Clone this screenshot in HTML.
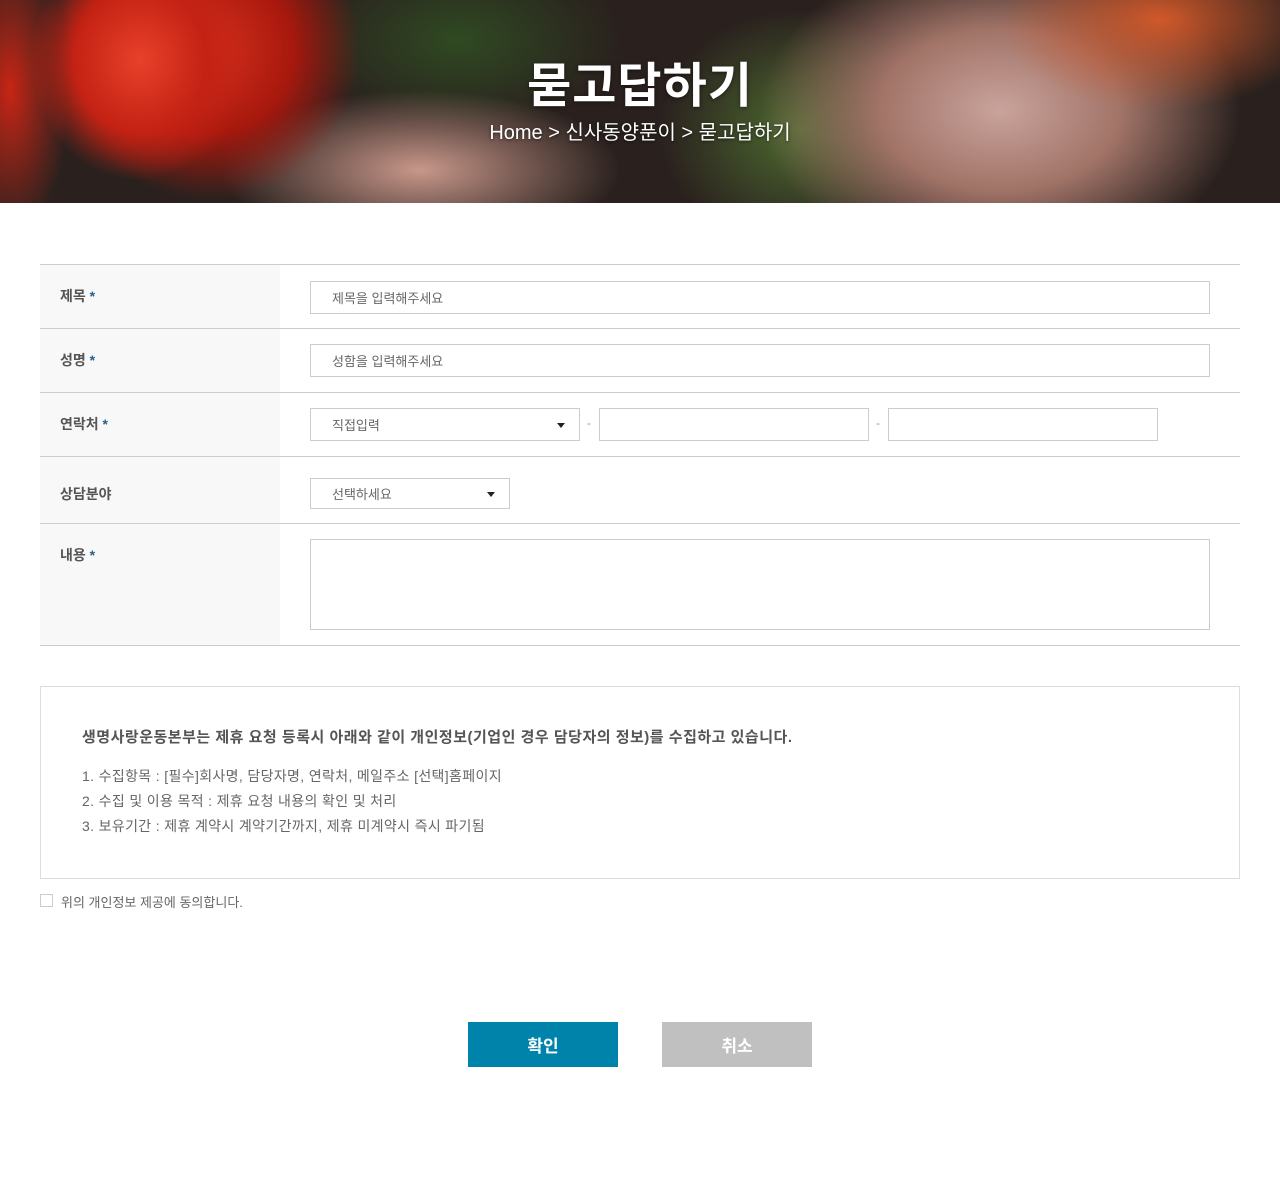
<!DOCTYPE html>
<html><head><meta charset="utf-8"><style>
*{margin:0;padding:0;box-sizing:border-box}
body{width:1280px;height:1201px;background:#fff;font-family:"Liberation Sans","Noto Sans CJK KR",sans-serif;position:relative;overflow:hidden;color:#555}
.hero{position:absolute;left:0;top:0;width:1280px;height:203px;overflow:hidden;
background:
radial-gradient(ellipse 110px 120px at 140px 60px,#e8412a 0%,#c42214 60%,rgba(120,10,5,0) 100%),
radial-gradient(ellipse 150px 150px at 210px 50px,#d3301c 0%,#a8180d 55%,rgba(80,10,5,0) 100%),
radial-gradient(ellipse 60px 150px at 10px 90px,#c72515 0%,rgba(120,15,8,0) 100%),
radial-gradient(ellipse 160px 90px at 1160px 20px,#d0582a 0%,rgba(150,50,20,0) 100%),
radial-gradient(ellipse 240px 160px at 1000px 110px,#c9a39c 0%,#a27468 50%,rgba(80,40,35,0) 100%),
radial-gradient(ellipse 200px 80px at 420px 170px,#c8978a 0%,rgba(100,60,50,0) 100%),
radial-gradient(ellipse 160px 90px at 460px 40px,#2f4a22 0%,rgba(30,40,20,0) 100%),
radial-gradient(ellipse 140px 120px at 800px 130px,#4d6b30 0%,rgba(40,60,25,0) 100%),
#2a211e}
.hero h1{position:absolute;left:0;width:1280px;top:58px;text-align:center;color:#fff;font-size:48px;font-weight:bold;line-height:1.2;letter-spacing:1px;text-shadow:0 1px 4px rgba(0,0,0,.5)}
.hero p{position:absolute;left:0;width:1280px;top:120px;text-align:center;color:#fff;font-size:20px;line-height:26px;text-shadow:0 1px 3px rgba(0,0,0,.6)}
.tbl{position:absolute;left:40px;top:264px;width:1200px;border-top:1px solid #ccc}
.row{position:relative;border-bottom:1px solid #ccc}
.lab{position:absolute;left:0;top:0;bottom:0;width:240px;background:#f8f8f8;padding:21px 0 0 20px;font-size:14px;font-weight:bold;color:#555}
.lab b{color:#2a5f86}
.in{position:absolute;border:1px solid #ccc;background:#fff;font-size:13px;color:#666;padding-left:21px;display:flex;align-items:center}
.arr{position:absolute;right:14px;top:50%;margin-top:-2px;border-left:4px solid transparent;border-right:4px solid transparent;border-top:5px solid #222}
.dash{position:absolute;font-size:12px;color:#999}
.notice{position:absolute;left:40px;top:686px;width:1200px;height:193px;border:1px solid #ddd}
.notice h3{position:absolute;left:41px;top:39px;font-size:15px;font-weight:bold;color:#555;letter-spacing:0.5px;white-space:nowrap}
.notice ul{position:absolute;left:41px;top:77px;list-style:none;font-size:14px;line-height:25px;color:#666;letter-spacing:0.35px;white-space:nowrap}
.chk{position:absolute;left:40px;top:894px;width:13px;height:13px;border:1px solid #ccc}
.chkt{position:absolute;left:61px;top:892px;font-size:13px;color:#666}
.btn{position:absolute;top:1022px;width:150px;height:45px;color:#fff;font-size:17px;font-weight:bold;display:flex;align-items:center;justify-content:center}
</style></head><body>
<div class="hero"><h1>묻고답하기</h1><p>Home &gt; 신사동양푼이 &gt; 묻고답하기</p></div>
<div class="tbl">
<div class="row" style="height:64px"><div class="lab">제목 <b>*</b></div><div class="in" style="left:270px;top:16px;width:900px;height:33px">제목을 입력해주세요</div></div>
<div class="row" style="height:64px"><div class="lab">성명 <b>*</b></div><div class="in" style="left:270px;top:15px;width:900px;height:33px">성함을 입력해주세요</div></div>
<div class="row" style="height:64px"><div class="lab">연락처 <b>*</b></div>
<div class="in" style="left:270px;top:15px;width:270px;height:33px">직접입력<span class="arr"></span></div><span class="dash" style="left:547px;top:23px">-</span>
<div class="in" style="left:559px;top:15px;width:270px;height:33px"></div><span class="dash" style="left:836px;top:23px">-</span>
<div class="in" style="left:848px;top:15px;width:270px;height:33px"></div></div>
<div class="row" style="height:67px"><div class="lab" style="padding-top:27px">상담분야</div><div class="in" style="left:270px;top:21px;width:200px;height:31px">선택하세요<span class="arr"></span></div></div>
<div class="row" style="height:122px"><div class="lab">내용 <b>*</b></div><div class="in" style="left:270px;top:15px;width:900px;height:91px"></div></div>
</div>
<div class="notice"><h3>생명사랑운동본부는 제휴 요청 등록시 아래와 같이 개인정보(기업인 경우 담당자의 정보)를 수집하고 있습니다.</h3>
<ul><li>1. 수집항목 : [필수]회사명, 담당자명, 연락처, 메일주소 [선택]홈페이지</li><li>2. 수집 및 이용 목적 : 제휴 요청 내용의 확인 및 처리</li><li>3. 보유기간 : 제휴 계약시 계약기간까지, 제휴 미계약시 즉시 파기됨</li></ul></div>
<div class="chk"></div><div class="chkt">위의 개인정보 제공에 동의합니다.</div>
<div class="btn" style="left:468px;background:#0083aa">확인</div>
<div class="btn" style="left:662px;background:#c0c0c0">취소</div>
</body></html>
